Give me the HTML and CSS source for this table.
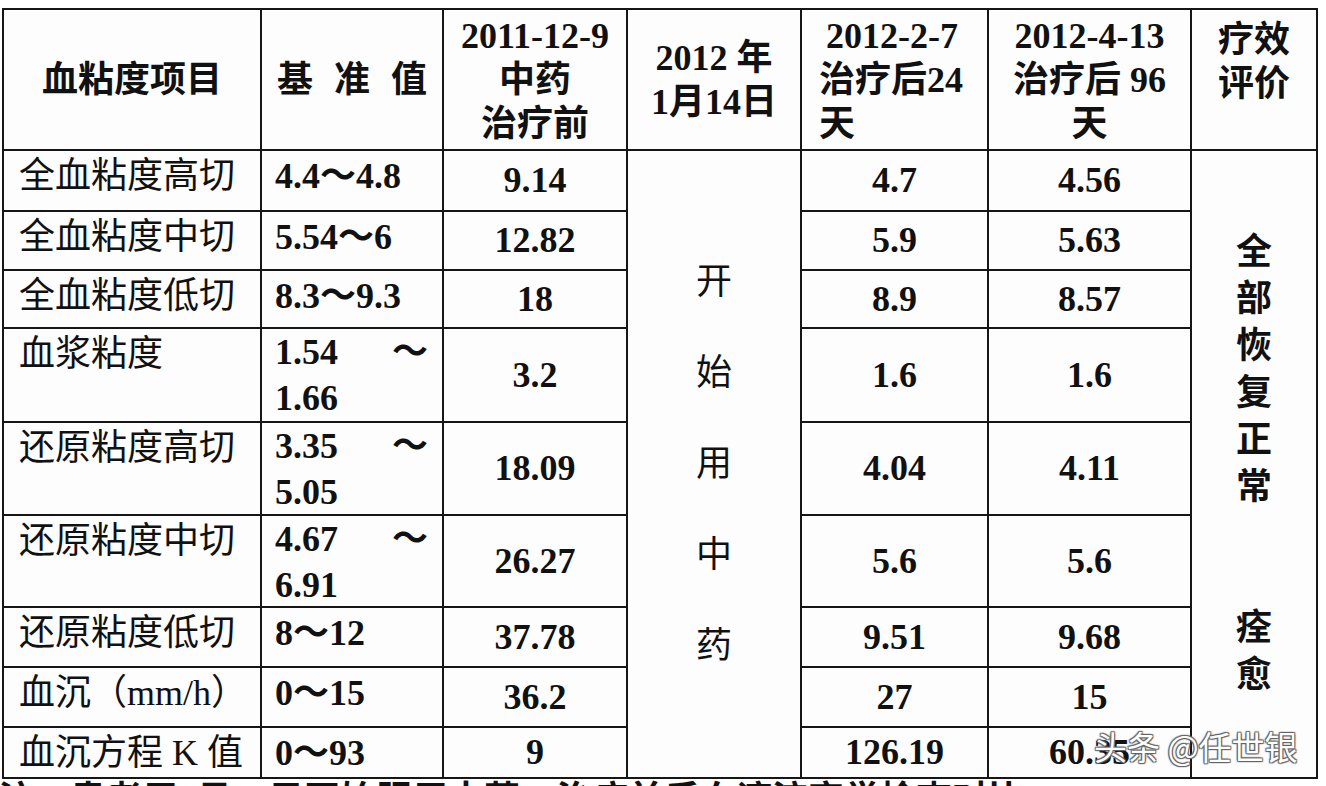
FILE: index.html
```html
<!DOCTYPE html>
<html lang="zh-CN">
<head>
<meta charset="utf-8">
<title>血粘度项目</title>
<link rel="stylesheet" href="styles.css">
</head>
<body>
<div class="page">
  <div class="sheet">
    <div class="grid">
      <div class="cell head mid">血粘度项目</div>
      <div class="cell head mid spaced">基 准 值</div>
      <div class="cell head mid"><div>2011-12-9</div><div>中药</div><div>治疗前</div></div>
      <div class="cell head mid"><div>2012 年</div><div>1月14日</div></div>
      <div class="cell head mid c5"><div class="ctr">2012-2-7</div><div>治疗后24</div><div>天</div></div>
      <div class="cell head mid"><div>2012-4-13</div><div>治疗后 96</div><div>天</div></div>
      <div class="cell head top"><div>疗效</div><div>评价</div></div>

      <div class="cell label">全血粘度高切</div>
      <div class="cell ref">4.4～4.8</div>
      <div class="cell num">9.14</div>
      <div class="cell vert start">开<br>始<br>用<br>中<br>药</div>
      <div class="cell num">4.7</div>
      <div class="cell num">4.56</div>
      <div class="cell vert eval">全<br>部<br>恢<br>复<br>正<br>常<br><br><br>痊<br>愈</div>

      <div class="cell label">全血粘度中切</div>
      <div class="cell ref">5.54～6</div>
      <div class="cell num">12.82</div>
      <div class="cell num">5.9</div>
      <div class="cell num">5.63</div>

      <div class="cell label">全血粘度低切</div>
      <div class="cell ref">8.3～9.3</div>
      <div class="cell num">18</div>
      <div class="cell num">8.9</div>
      <div class="cell num">8.57</div>

      <div class="cell label">血浆粘度</div>
      <div class="cell ref two"><div class="split"><span>1.54</span><span>～</span></div><div>1.66</div></div>
      <div class="cell num">3.2</div>
      <div class="cell num">1.6</div>
      <div class="cell num">1.6</div>

      <div class="cell label">还原粘度高切</div>
      <div class="cell ref two"><div class="split"><span>3.35</span><span>～</span></div><div>5.05</div></div>
      <div class="cell num">18.09</div>
      <div class="cell num">4.04</div>
      <div class="cell num">4.11</div>

      <div class="cell label">还原粘度中切</div>
      <div class="cell ref two"><div class="split"><span>4.67</span><span>～</span></div><div>6.91</div></div>
      <div class="cell num">26.27</div>
      <div class="cell num">5.6</div>
      <div class="cell num">5.6</div>

      <div class="cell label">还原粘度低切</div>
      <div class="cell ref">8～12</div>
      <div class="cell num">37.78</div>
      <div class="cell num">9.51</div>
      <div class="cell num">9.68</div>

      <div class="cell label">血沉（mm/h）</div>
      <div class="cell ref">0～15</div>
      <div class="cell num">36.2</div>
      <div class="cell num">27</div>
      <div class="cell num">15</div>

      <div class="cell label">血沉方程 K 值</div>
      <div class="cell ref">0～93</div>
      <div class="cell num">9</div>
      <div class="cell num">126.19</div>
      <div class="cell num">60.35</div>
    </div>
    <div class="watermark">头条 @任世银</div>
  </div>
  <div class="note">注：患者用1月14日开始服用中药，治疗前后血液流变学检查对比</div>
</div>
</body>
</html>
```

FILE: styles.css
```css
html, body {
  margin: 0;
  padding: 0;
  background: #ffffff;
  overflow: hidden;
}

.page {
  width: 1326px;
  height: 786px;
  overflow: hidden;
  padding: 8px 0 0 2px;
  box-sizing: border-box;
  color: #111111;
  font-family: "Liberation Serif", "Noto Sans CJK SC", serif;
}

.sheet {
  position: relative;
  width: 1316px;
}

.grid {
  display: grid;
  grid-template-columns: 256px 180px 182px 172px 185px 201px 124px;
  grid-template-rows: 139px 59px 57px 56px 92px 91px 90px 58px 58px 49px;
  gap: 2px;
  padding: 2px;
  background: #161616;
}

.cell {
  background: #fdfdfe;
  font-size: 36px;
  line-height: 47px;
  overflow: hidden;
}

.head {
  font-weight: 700;
  line-height: 44px;
  text-align: center;
}

.head.mid {
  display: flex;
  flex-direction: column;
  justify-content: center;
}

.head.top {
  padding-top: 8px;
}

.head.spaced {
  word-spacing: 12px;
}

.head.c5 {
  text-align: left;
  padding-left: 17px;
}

.head.c5 .ctr {
  padding-left: 7px;
}

.label {
  font-family: "Liberation Serif", "Noto Sans CJK SC", serif;
  font-weight: 400;
  padding: 2px 0 0 15px;
  white-space: nowrap;
}

.ref {
  font-weight: 700;
  padding: 2px 14px 0 13px;
  white-space: nowrap;
}

.ref.two {
  padding-top: 0;
  line-height: 46px;
}

.split {
  display: flex;
  justify-content: space-between;
}

.num {
  font-weight: 700;
  display: flex;
  align-items: center;
  justify-content: center;
}

.vert {
  grid-row: 2 / span 9;
  display: flex;
  align-items: center;
  justify-content: center;
  text-align: center;
}

.start {
  grid-column: 4;
  font-weight: 400;
  line-height: 91px;
}

.eval {
  grid-column: 7;
  font-weight: 700;
  line-height: 47px;
}

.watermark {
  position: absolute;
  left: 1092px;
  top: 718px;
  font-family: "Noto Sans CJK SC", sans-serif;
  font-size: 33px;
  line-height: 40px;
  color: #ffffff;
  white-space: nowrap;
  text-shadow: 0 0 1px #555, 1px 1px 1px #666, -1px -1px 1px #666, 1px -1px 1px #666, -1px 1px 1px #666;
}

.note {
  font-size: 36px;
  font-weight: 700;
  line-height: 36px;
  white-space: nowrap;
  margin: 3px 0 0 -4px;
}
```
